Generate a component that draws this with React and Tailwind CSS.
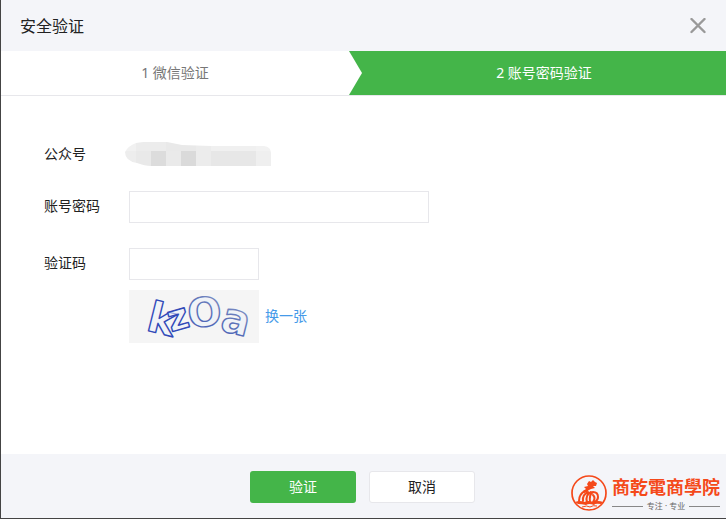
import { useState } from 'react';

const mosaicTop = [
  { x: 0, w: 11, color: '#f1f1f1' },
  { x: 11, w: 30, color: '#ececec' },
  { x: 41, w: 30, color: '#e9e9e9' },
  { x: 71, w: 15, color: '#ececec' },
  { x: 86, w: 45, color: '#f0f0f0' },
  { x: 131, w: 15, color: '#f2f2f2' },
];

const mosaicBottom = [
  { x: 0, w: 11, color: '#ededed' },
  { x: 11, w: 15, color: '#e9e9e9' },
  { x: 26, w: 15, color: '#dcdcdc' },
  { x: 41, w: 15, color: '#eaeaea' },
  { x: 56, w: 15, color: '#dadada' },
  { x: 71, w: 15, color: '#ececec' },
  { x: 86, w: 45, color: '#e7e7e7' },
  { x: 131, w: 15, color: '#efefef' },
];

const MaskedAccount = () => (
  <svg width="146" height="24" viewBox="0 0 146 24" className="-ml-1" aria-hidden="true">
    <clipPath id="mask-shape">
      <path d="M0 10 Q3 4 11 1 Q20 -1 42 0 L57 3 L86 4 H139 Q146 5 146 11 V24 H26 Q20 24 12 21 Q0 19 0 10Z" />
    </clipPath>
    <g clipPath="url(#mask-shape)">
      {mosaicTop.map((b) => (
        <rect key={b.x} x={b.x} y="0" width={b.w} height="9" fill={b.color} />
      ))}
      {mosaicBottom.map((b) => (
        <rect key={b.x} x={b.x} y="9" width={b.w} height="15" fill={b.color} />
      ))}
    </g>
  </svg>
);

// Hollow, tilted and overlapping characters
const Captcha = () => (
  <svg width="130" height="53" viewBox="0 0 130 53" className="bg-[#f5f5f5]">
    <defs>
      <linearGradient id="ink" x1="0" y1="1" x2="1" y2="0">
        <stop offset="0" stopColor="#3049b8" />
        <stop offset="0.6" stopColor="#5a70b8" />
        <stop offset="1" stopColor="#b0b7d2" />
      </linearGradient>
    </defs>
    <text
      fontFamily="'DejaVu Sans', sans-serif"
      fontWeight="700"
      fill="#eef3fa"
      fillOpacity="0.6"
      stroke="url(#ink)"
      strokeWidth="1.4"
      strokeLinejoin="round"
    >
      <tspan x="16" y="40" rotate="14" fontSize="42" stroke="#3049b8">k</tspan>
      <tspan x="42" y="42" rotate="-16" fontSize="36" stroke="#3049b8">z</tspan>
      <tspan x="60" y="38" rotate="-6" fontSize="40">O</tspan>
      <tspan x="90" y="40" rotate="14" fontSize="42">a</tspan>
    </text>
  </svg>
);

const BrandMark = () => (
  <div className="absolute right-1.5 bottom-1.5 flex items-center gap-1">
    <svg width="38" height="38" viewBox="0 0 38 38" fill="none" aria-hidden="true">
      <circle cx="19" cy="19" r="17" stroke="#f5491a" strokeWidth="1.7" />
      {/* dragon */}
      <path
        fill="#f5491a"
        d="M17 10 L19 7 L21 8 L23 6 L25 8 L27 9 L26 12 L23 12 L25 14 L21 15 Q18 16 17 18 L14 19 L13 17 L16 15 L14 13 L18 12Z"
      />
      <path
        stroke="#f5491a"
        strokeWidth="2"
        strokeLinecap="round"
        d="M9 27 Q9 20 15 17 M13 27 Q12 21 18 18 M17 28 Q15 21 21 18 M20 28 Q19 20 23 18 Q28 18 28 23 Q28 26 25 28 M23 28 Q26 24 23 21"
      />
      {/* waves */}
      <path
        fill="#f5491a"
        d="M5 28 Q10 26 14 28 Q19 26 23 28 Q28 26 33 28 L31 30 Q25 29 24 31 Q19 29 16 31 Q12 30 8 30 Z"
      />
      <path stroke="#f5491a" strokeWidth="1" d="M12 33 Q17 31 20 33 Q23 31 27 32" />
    </svg>
    <div>
      <p className="text-lg leading-6 font-bold text-[#f5491a] font-['Noto_Sans_CJK_TC',sans-serif]">商乾電商學院</p>
      <div className="flex items-center gap-1 mt-0.5 text-[8px] leading-3 text-[#666]">
        <span className="h-px flex-1 bg-[#888]" />
        专注 · 专业
        <span className="h-px flex-1 bg-[#888]" />
      </div>
    </div>
  </div>
);

const App = () => {
  const [password, setPassword] = useState('');
  const [code, setCode] = useState('');

  return (
    <div className="min-h-screen flex flex-col border-l border-b border-[#444] bg-white text-sm text-[#222] font-['Noto_Sans','Noto_Sans_CJK_SC',sans-serif]">
      {/* Header */}
      <header className="flex items-center justify-between bg-[#f4f5f9] h-[51px] pl-[19px] pr-5">
        <h1 className="text-base">安全验证</h1>
        <button type="button" aria-label="关闭">
          <svg width="16" height="16" viewBox="0 0 16 16" stroke="#999" strokeWidth="2.4" strokeLinecap="round">
            <path d="M1.5 1 L14.5 14 M14.5 1 L1.5 14" />
          </svg>
        </button>
      </header>

      {/* Steps */}
      <ol className="flex h-[45px] border-b border-[#e7e7eb] leading-[44px] text-center">
        <li className="w-[48%] text-[#777]">1 微信验证</li>
        <li className="flex-1 flex bg-[#44b549] text-white">
          <svg width="13" height="44" viewBox="0 0 13 44" aria-hidden="true">
            <path d="M0 0 L13 22 L0 44Z" fill="#fff" />
          </svg>
          <span className="flex-1">2 账号密码验证</span>
        </li>
      </ol>

      {/* Form */}
      <form id="verify" className="flex-1 pt-[42px] pl-[43px] pr-5" onSubmit={(e) => e.preventDefault()}>
        <div className="flex items-center h-8 mb-[21px]">
          <span className="w-[85px]">公众号</span>
          <MaskedAccount />
        </div>
        <div className="flex items-center mb-[25px]">
          <label htmlFor="password" className="w-[85px] pb-0.5">账号密码</label>
          <input
            id="password"
            type="password"
            value={password}
            onChange={(e) => setPassword(e.target.value)}
            className="w-[300px] h-8 px-2 border border-[#e7e7eb] outline-none"
          />
        </div>
        <div className="flex items-center mb-2.5">
          <label htmlFor="code" className="w-[85px] pb-0.5">验证码</label>
          <input
            id="code"
            type="text"
            value={code}
            onChange={(e) => setCode(e.target.value)}
            className="w-[130px] h-8 px-2 border border-[#e7e7eb] outline-none"
          />
        </div>
        <div className="flex items-center gap-1.5 pl-[85px]">
          <Captcha />
          <a href="#" className="pb-0.5 text-[#459ae9]">换一张</a>
        </div>
      </form>

      {/* Footer */}
      <footer className="relative flex items-center justify-center gap-[13px] h-16 pt-0.5 pr-0.5 bg-[#f4f5f9]">
        <button type="submit" form="verify" className="w-[106px] h-8 rounded-[3px] bg-[#44b549] text-white">
          验证
        </button>
        <button type="button" className="w-[106px] h-8 rounded-[3px] border border-[#e7e7eb] bg-white">
          取消
        </button>
        <BrandMark />
      </footer>
    </div>
  );
};

export default App;
